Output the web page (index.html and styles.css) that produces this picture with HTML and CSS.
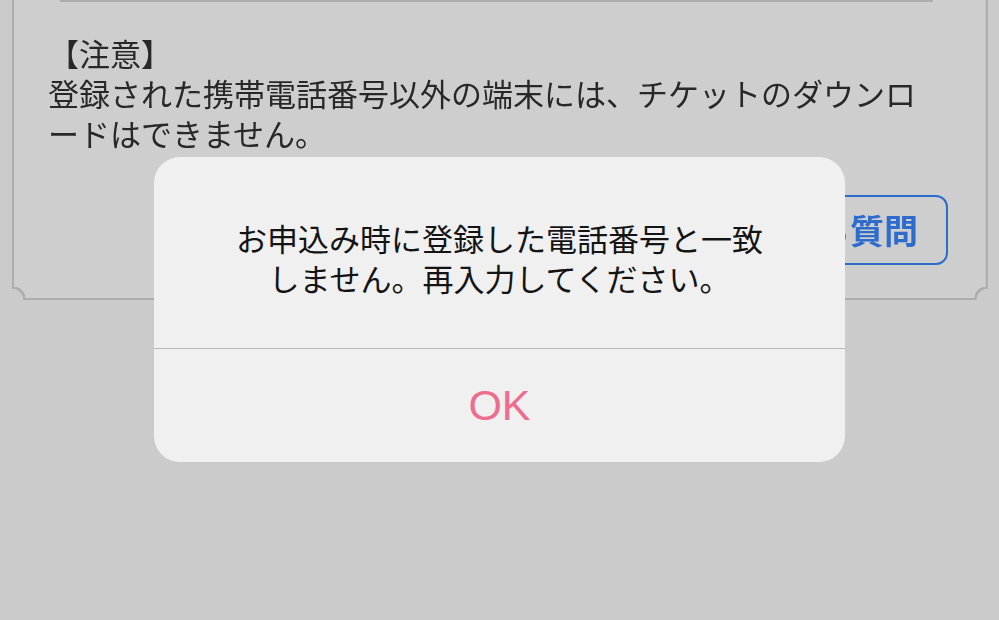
FILE: index.html
```html
<!DOCTYPE html>
<html lang="ja">
<head>
<meta charset="utf-8">
<title>電話番号確認</title>
<link rel="stylesheet" href="styles.css">
</head>
<body>
<div class="card-wrap">
  <div class="card">
    <div class="card-rule"></div>
    <p class="note">【注意】<br>登録された携帯電話番号以外の端末には、チケットのダウンロ<br>ードはできません。</p>
    <div class="actions">
      <button class="faq-btn" type="button">よくある質問</button>
    </div>
  </div>
</div>

<div class="alert" role="alertdialog">
  <div class="alert-body">
    <p class="alert-msg">お申込み時に登録した電話番号と一致<br>しません。再入力してください。</p>
  </div>
  <div class="alert-actions">
    <button class="alert-ok" type="button">OK</button>
  </div>
</div>
</body>
</html>
```

FILE: styles.css
```css
html, body {
  margin: 0;
  padding: 0;
}

body {
  width: 999px;
  height: 620px;
  overflow: hidden;
  background: #cbcbcb;
  font-family: "Noto Sans CJK JP", "Noto Sans", sans-serif;
  position: relative;
}

.card-wrap {
  margin: 0 11px 0 12px;
  filter: drop-shadow(-2px 0 0 #adadad) drop-shadow(2px 0 0 #adadad) drop-shadow(0 2px 0 #adadad);
}

.card {
  margin: 0 2px;
  height: 298px;
  background: #cecece;
  display: flex;
  flex-direction: column;
  -webkit-mask:
    radial-gradient(circle at 0 100%, transparent 11px, #000 11.5px) left / 51% 100% no-repeat,
    radial-gradient(circle at 100% 100%, transparent 11px, #000 11.5px) right / 51% 100% no-repeat;
  mask:
    radial-gradient(circle at 0 100%, transparent 11px, #000 11.5px) left / 51% 100% no-repeat,
    radial-gradient(circle at 100% 100%, transparent 11px, #000 11.5px) right / 51% 100% no-repeat;
}

.card-rule {
  height: 2px;
  margin: 0 53px 0 46px;
  background: #adadad;
}

.note {
  margin: 31px 0 0 34px;
  font-size: 31px;
  line-height: 40px;
  color: #282828;
  white-space: nowrap;
}

.actions {
  display: flex;
  justify-content: flex-end;
  padding-right: 38px;
  margin-top: 42px;
}

.faq-btn {
  height: 70px;
  box-sizing: border-box;
  padding: 0 28px;
  border: 2px solid #2d6bcd;
  border-radius: 12px;
  background: transparent;
  color: #2d6bcd;
  font-family: "Noto Sans CJK JP", sans-serif;
  font-size: 34px;
  font-weight: 700;
  line-height: 1;
}

.alert {
  position: absolute;
  left: 154px;
  top: 157px;
  width: 691px;
  height: 305px;
  border-radius: 26px;
  background: #f0f0f1;
  display: flex;
  flex-direction: column;
  overflow: hidden;
}

.alert-body {
  height: 192px;
  box-sizing: border-box;
  padding-top: 61px;
  border-bottom: 1px solid #b8b8b8;
}

.alert-msg {
  margin: 0;
  text-align: center;
  font-size: 31px;
  line-height: 40px;
  color: #141414;
  white-space: nowrap;
}

.alert-actions {
  flex: 1;
  display: flex;
  align-items: center;
  justify-content: center;
}

.alert-ok {
  border: 0;
  background: transparent;
  padding: 0;
  font-family: "Liberation Sans", Arial, sans-serif;
  font-size: 43px;
  line-height: 1;
  color: #ee6d8e;
}
```
